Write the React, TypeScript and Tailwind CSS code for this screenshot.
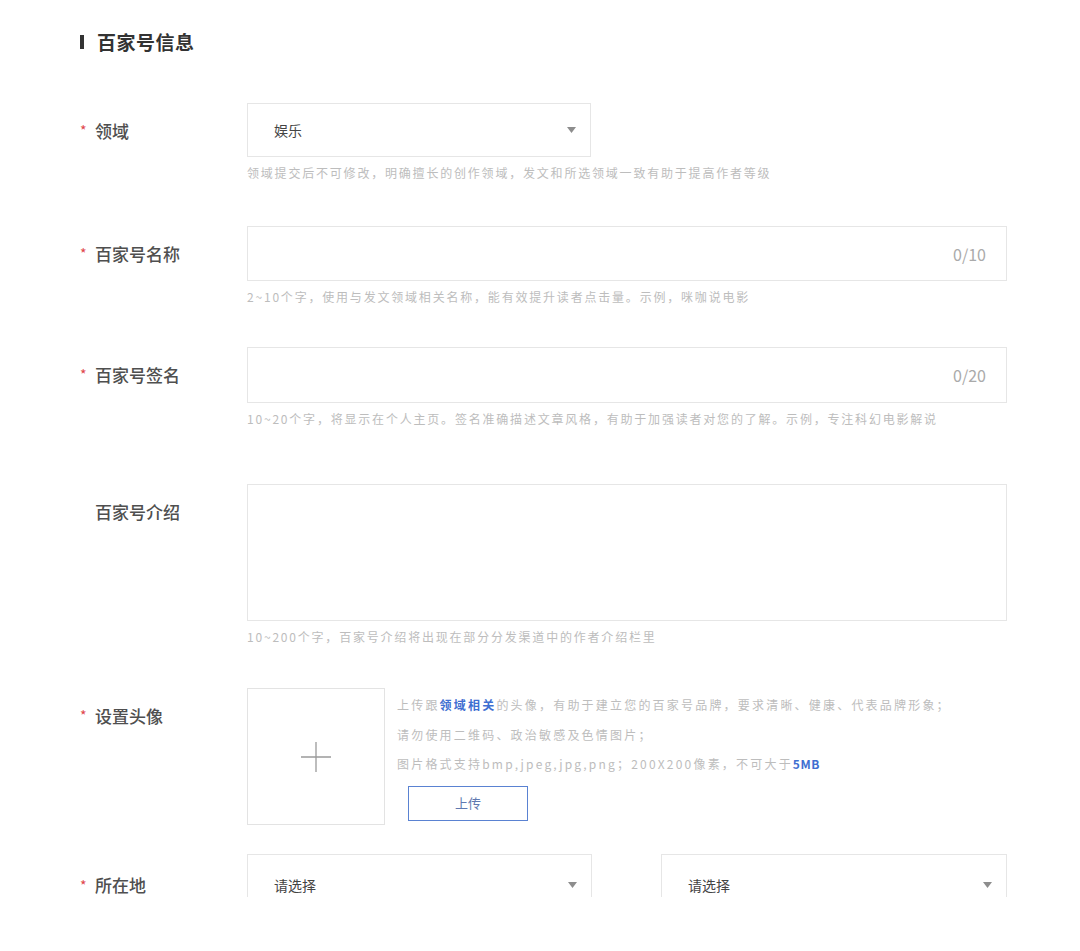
import React from "react";

const font = { fontFamily: '"Noto Sans CJK SC", "Noto Sans", sans-serif' };

function Label({ text, required = true, h = "h-[55px]" }: { text: string; required?: boolean; h?: string }) {
  return (
    <div className={`w-[167px] shrink-0 ${h} flex items-center`}>
      <span className={`w-[15px] text-[14px] text-[#e0454a] ${required ? "" : "invisible"}`}>*</span>
      <span className="text-[17px] font-medium text-[#4f4f4f]">{text}</span>
    </div>
  );
}

function Help({ children }: { children: React.ReactNode }) {
  return (
    <div className="mt-[7px] h-[18px] leading-[18px] text-[12px] tracking-[1.8px] text-[#bdbdbd] whitespace-nowrap">
      {children}
    </div>
  );
}

function Arrow() {
  return (
    <svg width="9" height="6" viewBox="0 0 9 6" className="shrink-0">
      <path d="M0 0 L9 0 L4.5 6 Z" fill="#8d8d8d" />
    </svg>
  );
}

export default function App() {
  return (
    <div className="w-[1080px] h-[951px] bg-white overflow-hidden" style={font}>
      <div className="pl-[80px] pt-[31px]">
        {/* Title */}
        <div className="flex items-center h-[22px]">
          <div className="w-[4px] h-[14px] bg-[#333]" />
          <span className="ml-[13px] text-[19px] font-bold text-[#333] tracking-[0.5px]">百家号信息</span>
        </div>

        {/* 领域 */}
        <div className="flex mt-[50px]">
          <Label text="领域" />
          <div>
            <div className="w-[344px] h-[54px] border border-[#e6e6e6] flex items-center justify-between pl-[26px] pr-[14px]">
              <span className="text-[14px] text-[#444]">娱乐</span>
              <Arrow />
            </div>
            <Help>领域提交后不可修改，明确擅长的创作领域，发文和所选领域一致有助于提高作者等级</Help>
          </div>
        </div>

        {/* 百家号名称 */}
        <div className="flex mt-[44px]">
          <Label text="百家号名称" />
          <div>
            <div className="w-[760px] h-[55px] border border-[#e6e6e6] flex items-center justify-end pr-[20px]">
              <span className="text-[16px] text-[#aaaaaa]">0/10</span>
            </div>
            <Help>2~10个字，使用与发文领域相关名称，能有效提升读者点击量。示例，咪咖说电影</Help>
          </div>
        </div>

        {/* 百家号签名 */}
        <div className="flex mt-[41px]">
          <Label text="百家号签名" />
          <div>
            <div className="w-[760px] h-[56px] border border-[#e6e6e6] flex items-center justify-end pr-[20px]">
              <span className="text-[16px] text-[#aaaaaa]">0/20</span>
            </div>
            <Help>10~20个字，将显示在个人主页。签名准确描述文章风格，有助于加强读者对您的了解。示例，专注科幻电影解说</Help>
          </div>
        </div>

        {/* 百家号介绍 */}
        <div className="flex mt-[56px]">
          <Label text="百家号介绍" required={false} />
          <div>
            <div className="w-[760px] h-[137px] border border-[#e6e6e6]" />
            <Help>10~200个字，百家号介绍将出现在部分分发渠道中的作者介绍栏里</Help>
          </div>
        </div>

        {/* 设置头像 */}
        <div className="flex mt-[42px]">
          <Label text="设置头像" />
          <div className="flex">
            <div className="w-[138px] h-[137px] border border-[#e3e3e3] flex items-center justify-center">
              <svg width="32" height="32" viewBox="0 0 32 32">
                <path d="M16 1 V31 M1 16 H31" stroke="#9a9a9a" strokeWidth="1.3" />
              </svg>
            </div>
            <div className="ml-[12px] pt-[2px]">
              <div className="text-[12px] tracking-[2.2px] text-[#bdbdbd] leading-[29.5px] whitespace-nowrap">
                <div>
                  上传跟<span className="text-[#3f6fd1] font-bold">领域相关</span>的头像，有助于建立您的百家号品牌，要求清晰、健康、代表品牌形象；
                </div>
                <div>请勿使用二维码、政治敏感及色情图片；</div>
                <div>
                  图片格式支持bmp,jpeg,jpg,png；200X200像素，不可大于<span className="text-[#3f6fd1] font-bold tracking-[0.5px]">5MB</span>
                </div>
              </div>
              <div className="ml-[11px] mt-[7px] w-[120px] h-[35px] border border-[#5a82d2] flex items-center justify-center text-[13px] text-[#6079b0]">
                上传
              </div>
            </div>
          </div>
        </div>

        {/* 所在地 */}
        <div className="flex mt-[29px]">
          <Label text="所在地" h="h-[62px]" />
          <div className="flex h-[43px] overflow-hidden">
            <div className="w-[345px] h-[62px] shrink-0 border border-[#e6e6e6] flex items-center justify-between pl-[26px] pr-[14px]">
              <span className="text-[14px] text-[#444]">请选择</span>
              <Arrow />
            </div>
            <div className="ml-[69px] w-[346px] h-[62px] shrink-0 border border-[#e6e6e6] flex items-center justify-between pl-[26px] pr-[14px]">
              <span className="text-[14px] text-[#444]">请选择</span>
              <Arrow />
            </div>
          </div>
        </div>
      </div>
    </div>
  );
}
